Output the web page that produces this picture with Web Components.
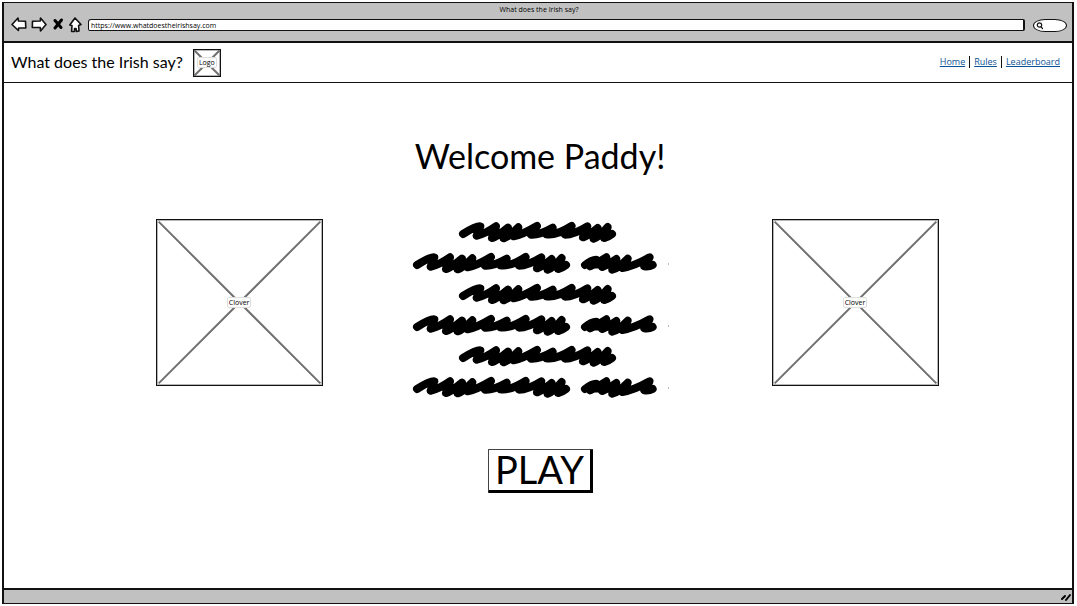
<!DOCTYPE html>
<html lang="en">
<head>
<meta charset="utf-8">
<title>What does the Irish say?</title>
<style>
  html, body { height: 100%; }
  body { margin: 0; padding: 2px 3px 2px 2px; box-sizing: border-box; background: #fff; color: #000; font-family: Lato, "Noto Sans", sans-serif; }
</style>
</head>
<body>
<browser-window>
  <browser-toolbar slot="toolbar" heading="What does the Irish say?" url="https://www.whatdoestheirishsay.com"></browser-toolbar>
  <site-header></site-header>
  <welcome-page></welcome-page>
</browser-window>

<script>
const define = (name, html, setup) => {
  const template = document.createElement('template');
  template.innerHTML = html;
  customElements.define(name, class extends HTMLElement {
    constructor() {
      super();
      this.attachShadow({ mode: 'open' }).append(template.content.cloneNode(true));
    }
    connectedCallback() { if (setup) setup(this, this.shadowRoot); }
  });
};

define('browser-window', `
  <style>
    :host { display: flex; flex-direction: column; box-sizing: border-box; min-height: 100%; border: 1px solid #111; border-left-width: 2px; border-right-width: 2px; }
    .body { flex: 1; display: flex; flex-direction: column; }
    footer { display: flex; justify-content: flex-end; align-items: center; height: 13px; border-top: 2px solid #111; background: #c1c1c1; }
    svg { display: block; }
  </style>
  <slot name="toolbar"></slot>
  <div class="body"><slot></slot></div>
  <footer><svg width="12" height="12" viewBox="0 0 12 12" stroke="#000" stroke-width="2" stroke-linecap="round"><path d="M2 8L5 5M6 9L10 4"/></svg></footer>
`);

define('browser-toolbar', `
  <style>
    :host { display: flex; flex-direction: column; box-sizing: border-box; height: 40px; padding: 2px 5px 0 7px; border-bottom: 2px solid #111; background: #c1c1c1; }
    .title { font: 7px/10px "Open Sans", sans-serif; text-align: center; }
    .row { display: flex; align-items: center; height: 20px; }
    nav { display: flex; gap: 4px; width: 77px; }
    button { display: block; padding: 0; border: 0; background: none; }
    svg { display: block; fill: #fff; stroke: #111; stroke-width: 1.6; stroke-linejoin: round; stroke-linecap: round; }
    input { font: 7px/8px "Open Sans", sans-serif; color: #000; background: #fff; box-sizing: border-box; min-width: 0; outline: 0; margin: 0; }
    .url { flex: 1; height: 12px; padding: 0 2px; border: 1px solid #111; border-width: 1px 2px 1px 1px; border-radius: 3px 2px 2px 2px; }
    .search { position: relative; margin-left: 8px; width: 34px; height: 13px; }
    .search input { display: block; width: 100%; height: 13px; border: 1px solid #111; border-radius: 13px / 7px; padding: 0 4px 0 10px; }
    .search svg { position: absolute; left: 3px; top: 2px; fill: none; stroke-width: 1.2; }
  </style>
  <div class="title"></div>
  <div class="row">
    <nav aria-label="Browser">
      <button aria-label="Back"><svg width="16" height="16" viewBox="0 0 16 16"><path d="M1 7.500L7 1L7.500 4L14.500 4.200L14.800 11L7.600 11L7.400 13.500Z"/></svg></button>
      <button aria-label="Forward"><svg width="16" height="16" viewBox="0 0 16 16"><path d="M15 7.500L9.500 1L9.300 4L1.500 4.200L1.300 10.500L9.300 10.500L9.500 14Z"/></svg></button>
      <button aria-label="Stop"><svg width="14" height="16" viewBox="0 0 14 16"><path d="M4 3.500L10 10.500M10.500 3L4 11" stroke="#000" stroke-width="3"/></svg></button>
      <button aria-label="Home page"><svg width="13" height="16" viewBox="0 0 13 16"><path d="M6 1L12 7.500L9.600 8.500L10 14L7.500 14.500L7 11.500L5.500 11.500L5.500 14.500L2.600 14.500L3 8.500L.8 8Z"/></svg></button>
    </nav>
    <input class="url" type="text" aria-label="Address">
    <div class="search"><input type="text" aria-label="Search"><svg width="9" height="9" viewBox="0 0 9 9"><circle cx="3.500" cy="4" r="2.200"/><path d="M5 5.800L6.500 7.500"/></svg></div>
  </div>
`, (host, root) => {
  root.querySelector('.title').textContent = host.getAttribute('heading');
  root.querySelector('.url').value = host.getAttribute('url');
});

define('image-placeholder', `
  <style>
    :host { display: grid; place-items: center; box-sizing: border-box; border: 1px solid #111; outline: 1px solid #7778; outline-offset: -2px; font: 7px/9px "Open Sans", sans-serif; }
    svg, span { grid-area: 1 / 1; }
    svg { display: block; width: 100%; height: 100%; stroke: #707070; }
    span { padding: 0 1px; border: 1px solid #ddd; border-radius: 2px; background: #fffffff0; }
  </style>
  <svg preserveAspectRatio="none" viewBox="0 0 100 100"><path d="M1 1L99 99M99 1L1 99" stroke-width="2" vector-effect="non-scaling-stroke"/></svg>
  <span><slot></slot></span>
`);

define('site-header', `
  <style>
    :host { display: flex; justify-content: space-between; align-items: center; box-sizing: border-box; height: 40px; padding: 0 12px 0 7px; border-bottom: 1px solid #111; }
    .brand { display: flex; align-items: center; gap: 10px; font-size: 16px; line-height: 20px; }
    .brand span { padding-bottom: 2px; }
    image-placeholder { width: 28px; height: 28px; }
    nav { display: flex; align-items: center; gap: 4px; padding-bottom: 2px; font: 9px/12px "Open Sans", sans-serif; }
    a { color: #0b5295; text-underline-offset: 1px; }
    i { width: 1px; height: 12px; background: #111; }
  </style>
  <div class="brand"><span>What does the Irish say?</span><image-placeholder>Logo</image-placeholder></div>
  <nav><a href="#home">Home</a><i></i><a href="#rules">Rules</a><i></i><a href="#leaderboard">Leaderboard</a></nav>
`);

define('scribble-line', `
  <style>
    :host { display: flex; justify-content: center; gap: 11px; height: 22px; }
    svg { display: block; overflow: visible; fill: none; stroke: #000; stroke-width: 24; stroke-linecap: round; stroke-linejoin: round; }
    .short, .dot { display: none; }
    :host([long]) .short, :host([long]) .dot { display: block; }
    .dot { width: 1px; height: 2px; align-self: center; background: #bbb; }
  </style>
  <svg width="157" height="22" viewBox="0 0 471 66"><path d="M12 36Q52 11 64 13L53 41Q75 38 111 13L99 48Q115 44 147 17L134 49Q150 44 178 16L164 43Q190 38 234 12L216 38Q240 40 281 17L262 37Q290 42 338 12L318 38Q345 38 385 13L372 46Q390 40 416 18L404 50Q422 44 446 15L436 48Q446 46 459 36M103 34L176 38M376 34L448 38"/></svg>
  <svg class="short" width="76" height="22" viewBox="0 0 228 66"><path d="M12 36Q32 20 45 20L27 40Q46 32 76 13L64 42Q80 36 106 18L94 50Q112 46 140 17L124 45Q158 40 206 13L190 40Q204 42 215 36M30 34L135 36"/></svg>
  <span class="dot"></span>
`);

define('welcome-page', `
  <style>
    :host { flex: 1; display: flex; flex-direction: column; align-items: center; }
    h1 { margin: 52px 0 0; padding-left: 4px; font-size: 34px; line-height: 42px; font-weight: 400; }
    .row { align-self: stretch; display: grid; grid-template-columns: 167px 1fr 167px; align-items: start; margin-top: 42px; padding: 0 12.500% 0 14.200%; }
    image-placeholder { height: 167px; }
    .text { display: grid; gap: 9px; justify-content: center; padding: 3px 12px 0 0; }
    scribble-line:not([long]) { padding-right: 7px; }
    button { margin: 50px 0 0 5px; padding: 0 6px 2px; font: 38px/38px Lato, sans-serif; color: #000; background: #fff; border: 1px solid #333; border-width: 1px 3px 3px 1px; border-color: #444 #000 #000 #444; border-radius: 1px; }
  </style>
  <h1>Welcome Paddy!</h1>
  <div class="row">
    <image-placeholder>Clover</image-placeholder>
    <div class="text">
      <scribble-line></scribble-line><scribble-line long></scribble-line>
      <scribble-line></scribble-line><scribble-line long></scribble-line>
      <scribble-line></scribble-line><scribble-line long></scribble-line>
    </div>
    <image-placeholder>Clover</image-placeholder>
  </div>
  <button>PLAY</button>
`);
</script>
</body>
</html>
